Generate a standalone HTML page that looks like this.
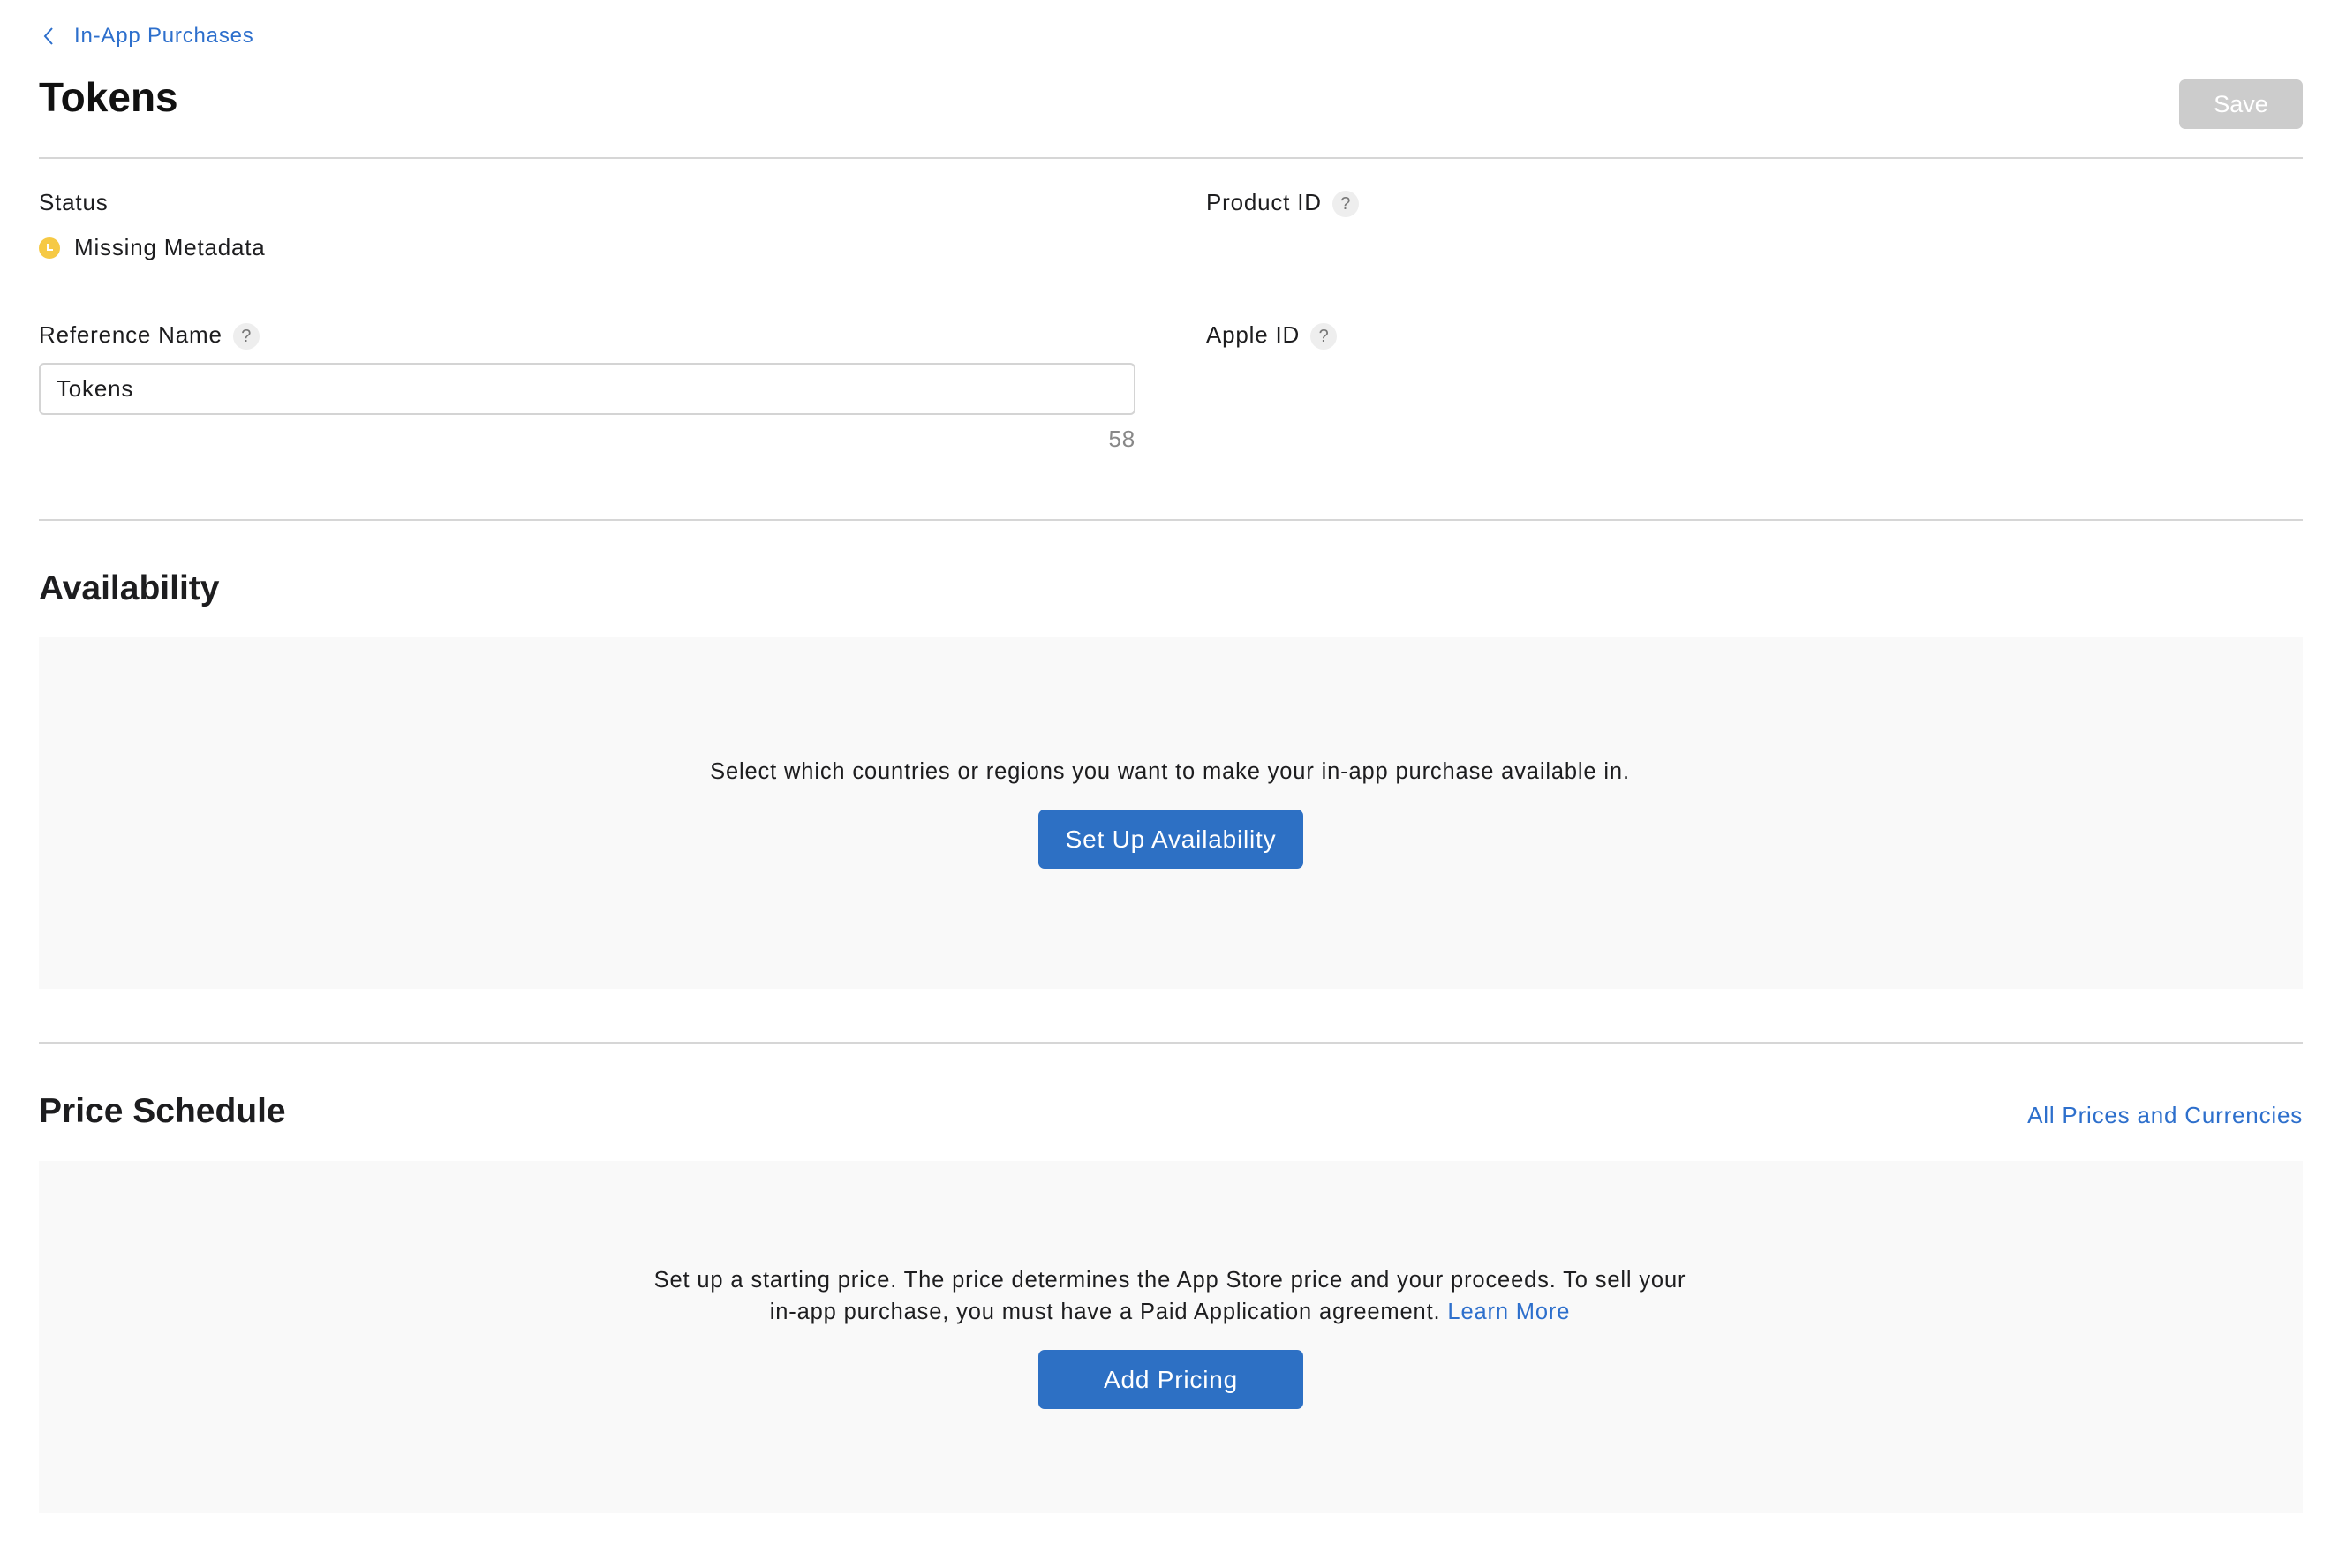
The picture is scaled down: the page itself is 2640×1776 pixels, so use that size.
<!DOCTYPE html>
<html><head><meta charset="utf-8"><style>
*{margin:0;padding:0;box-sizing:border-box}
body{width:2640px;height:1776px;background:#fff;font-family:"Liberation Sans",sans-serif;color:#1d1d1f;position:relative;overflow:hidden}
.a{position:absolute;white-space:nowrap}
.lbl{font-size:26px;color:#1d1d1f;line-height:30px;letter-spacing:0.8px}
.q{display:inline-block;width:30px;height:30px;border-radius:50%;background:#eeeeee;color:#777;font-size:20px;text-align:center;line-height:30px;vertical-align:middle;margin-left:12px;letter-spacing:0}
.hr{position:absolute;left:44px;width:2564px;height:2px;background:#d6d6d6}
.box{position:absolute;left:44px;width:2564px;background:#f9f9f9}
.btn{position:absolute;left:1176px;width:300px;height:67px;background:#2d70c4;border-radius:7px;color:#fff;font-size:28px;text-align:center;line-height:67px;letter-spacing:0.8px}
.h2{font-size:39px;font-weight:bold;line-height:46px}
.t{font-size:25.5px;line-height:36px;color:#1d1d1f;text-align:center;letter-spacing:0.85px}
.blue{color:#2d6fcc}
</style></head><body>
<svg class="a" style="left:48px;top:30px" width="14" height="22" viewBox="0 0 14 22"><path d="M11 2 L3 11 L11 20" fill="none" stroke="#2d6fcc" stroke-width="2"/></svg>
<div class="a blue" style="left:84px;top:26px;font-size:24px;line-height:30px;letter-spacing:0.8px">In-App Purchases</div>
<div class="a" style="left:44px;top:82px;font-size:46px;font-weight:bold;line-height:56px;color:#111">Tokens</div>
<div class="a" style="left:2468px;top:90px;width:140px;height:56px;background:#cccccc;border-radius:7px;color:#fff;font-size:27px;text-align:center;line-height:56px">Save</div>
<div class="hr" style="top:178px"></div>
<div class="a lbl" style="left:44px;top:214px">Status</div>
<div class="a" style="left:44px;top:269px;width:24px;height:24px;border-radius:50%;background:#f6c944"></div>
<svg class="a" style="left:44px;top:269px" width="24" height="24"><path d="M10 7 V14 H16" fill="none" stroke="#fff" stroke-width="2"/></svg>
<div class="a lbl" style="left:84px;top:265px">Missing Metadata</div>
<div class="a lbl" style="left:1366px;top:214px">Product ID<span class="q">?</span></div>
<div class="a lbl" style="left:44px;top:364px">Reference Name<span class="q">?</span></div>
<div class="a lbl" style="left:1366px;top:364px">Apple ID<span class="q">?</span></div>
<div class="a" style="left:44px;top:411px;width:1242px;height:59px;border:2px solid #d4d4d4;border-radius:6px;font-size:26px;line-height:55px;padding-left:18px;letter-spacing:0.8px">Tokens</div>
<div class="a" style="left:1236px;top:482px;font-size:26px;color:#888;line-height:30px;width:50px;text-align:right;letter-spacing:0.8px">58</div>
<div class="hr" style="top:588px"></div>
<div class="a h2" style="left:44px;top:644px">Availability</div>
<div class="box" style="top:721px;height:399px"></div>
<div class="a t" style="left:0;width:2650px;top:856px">Select which countries or regions you want to make your in-app purchase available in.</div>
<div class="btn" style="top:917px">Set Up Availability</div>
<div class="hr" style="top:1180px"></div>
<div class="a h2" style="left:44px;top:1236px">Price Schedule</div>
<div class="a blue" style="right:32px;top:1248px;font-size:26px;line-height:30px;letter-spacing:0.8px">All Prices and Currencies</div>
<div class="box" style="top:1315px;height:399px"></div>
<div class="a t" style="left:0;width:2650px;top:1432px">Set up a starting price. The price determines the App Store price and your proceeds. To sell your<br>in-app purchase, you must have a Paid Application agreement. <span class="blue">Learn More</span></div>
<div class="btn" style="top:1529px">Add Pricing</div>
</body></html>
